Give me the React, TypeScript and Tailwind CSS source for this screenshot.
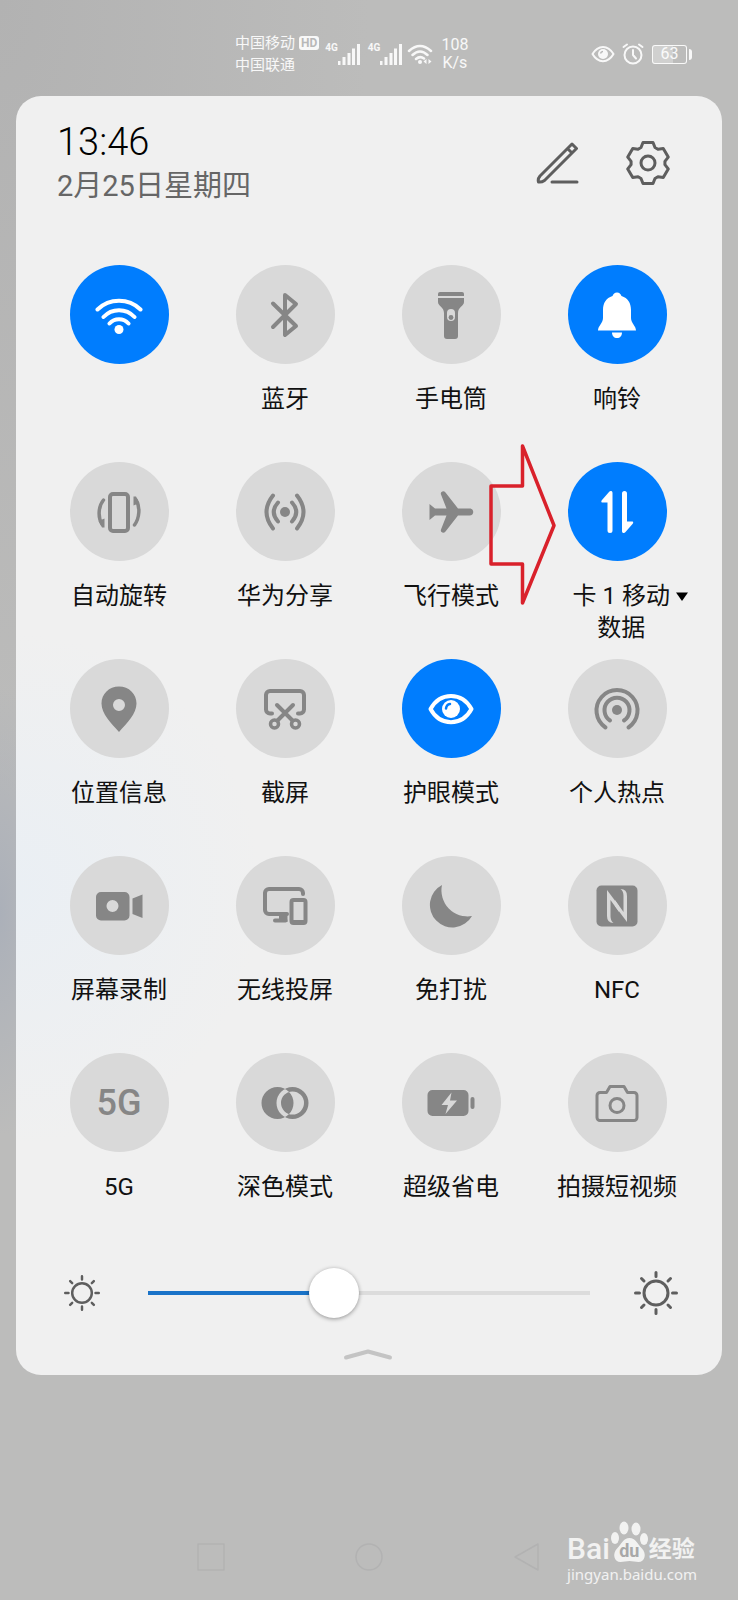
import { ReactNode, useState } from "react";
import clsx from "clsx";

interface Tile {
  name: string;
  label?: string;
  icon: ReactNode;
  on?: boolean;
}

const line = {
  fill: "none",
  stroke: "currentColor",
  strokeWidth: 4,
  strokeLinecap: "round",
  strokeLinejoin: "round",
} as const;

const Icon = ({ children }: { children: ReactNode }) => (
  <svg viewBox="0 0 48 48" className="h-12 w-12" fill="currentColor" aria-hidden="true">
    {children}
  </svg>
);

const tiles: Tile[] = [
  {
    name: "WLAN",
    on: true,
    icon: (
      <Icon>
        <path {...line} d="M2.500 18.500A31 31 0 0 1 45.500 18.500M8.500 26A21 21 0 0 1 39.500 26M14.500 32.500A13 13 0 0 1 33.500 32.500" />
        <circle cx="24" cy="38.500" r="4.500" />
      </Icon>
    ),
  },
  {
    name: "bluetooth",
    label: "蓝牙",
    icon: (
      <Icon>
        <path {...line} d="M12 12.500L35 35L24 44V4L35 13L12 36" />
      </Icon>
    ),
  },
  {
    name: "torch",
    label: "手电筒",
    icon: (
      <Icon>
        <path d="M13 1h22a2 2 0 0 1 2 2v2H11V3a2 2 0 0 1 2-2z" />
        <path
          fillRule="evenodd"
          d="M11 7h26v4c0 4-6 5-6 11v23a3 3 0 0 1-3 3h-8a3 3 0 0 1-3-3V22c0-6-6-7-6-11zM24 18a4 4 0 0 0-4 4v4a4 4 0 0 0 8 0v-4a4 4 0 0 0-4-4z"
        />
        <circle cx="24" cy="26.500" r="2.400" />
      </Icon>
    ),
  },
  {
    name: "sound",
    label: "响铃",
    on: true,
    icon: (
      <Icon>
        <path d="M24 1.500c2.500 0 3.500 1.500 4.500 3.500C35 7 38 12 38 19v8c0 5 5 8 5 12.500H5C5 35 10 32 10 27v-8c0-7 3-12 9.500-14 1-2 2-3.500 4.500-3.500z" />
        <path d="M19 41.500h10c0 3.500-2 5.500-5 5.500s-5-2-5-5.500z" />
      </Icon>
    ),
  },
  {
    name: "rotate",
    label: "自动旋转",
    icon: (
      <Icon>
        <rect {...line} x="15" y="6" width="18" height="37" rx="3" />
        <path {...line} strokeWidth="3.500" d="M8.500 12C3.500 18 2.500 29 7 36M39.500 37C44.500 30 45.500 19 41 12" />
        <path d="M3.500 33L9.500 30.500V39.500L7 39.500zM44.500 15L38.500 17.500V8.500L41 8.500z" />
      </Icon>
    ),
  },
  {
    name: "share",
    label: "华为分享",
    icon: (
      <Icon>
        <circle cx="24" cy="24" r="5" />
        <path {...line} d="M17 14.500Q8.500 24 17 33.500M31 14.500Q39.500 24 31 33.500M12 7.500Q-1 24 12 40.500M36 7.500Q49 24 36 40.500" />
      </Icon>
    ),
  },
  {
    name: "airplane",
    label: "飞行模式",
    icon: (
      <Icon>
        <path d="M42.500 20.500H31L18.500 4.500C16.500 2 13 4 14 6.500L19.500 20.500H8L2.500 16V32L8 27.500H19.500L14 41.500C13 44 16.500 46 18.500 43.500L31 27.500H42.500C47.500 27.500 47.500 20.500 42.500 20.500z" />
      </Icon>
    ),
  },
  {
    name: "data",
    label: "卡 1 移动数据",
    on: true,
    icon: (
      <Icon>
        <path d="M16 4C17 2.500 19.500 2.500 19.500 5V42.500a2.500 2.500 0 0 1-5 0V14.500L9.500 14.500C8 14.500 8 13 9 12z" />
        <path d="M32.500 44C31.500 45.500 29 45.500 29 43V5.500a2.500 2.500 0 0 1 5 0V33.500L39 33.500C40.500 33.500 40.500 35 39.500 36z" />
      </Icon>
    ),
  },
  {
    name: "location",
    label: "位置信息",
    icon: (
      <Icon>
        <path
          fillRule="evenodd"
          d="M24 1.500c10 0 17.500 7.500 17.500 17C41.500 29 32 38 24 47 16 38 6.500 29 6.500 18.500 6.500 9 14 1.500 24 1.500zM24 14a6 6 0 1 0 0 12 6 6 0 0 0 0-12z"
        />
      </Icon>
    ),
  },
  {
    name: "screenshot",
    label: "截屏",
    icon: (
      <Icon>
        <path {...line} d="M11 28.500H9a4 4 0 0 1-4-4V10a4 4 0 0 1 4-4H39a4 4 0 0 1 4 4V24.500a4 4 0 0 1-4 4H37M16 20L31.500 35.500M32 20L16.500 35.500" />
        <circle {...line} strokeWidth="3.500" cx="13.500" cy="39" r="4" />
        <circle {...line} strokeWidth="3.500" cx="34.500" cy="39" r="4" />
      </Icon>
    ),
  },
  {
    name: "eye",
    label: "护眼模式",
    on: true,
    icon: (
      <Icon>
        <path {...line} d="M3.500 24C13 6.500 35 6.500 44.500 24C35 41.500 13 41.500 3.500 24z" />
        <circle cx="24" cy="24" r="9" />
        <path d="M19 23.500Q19.500 19.500 23 19" fill="none" stroke="#007dfe" strokeWidth="2.500" strokeLinecap="round" />
      </Icon>
    ),
  },
  {
    name: "hotspot",
    label: "个人热点",
    icon: (
      <Icon>
        <circle cx="24" cy="25" r="5" />
        <path {...line} d="M17 35.500A12.500 12.500 0 1 1 31 35.500M12.500 42.500A20.500 20.500 0 1 1 35.500 42.500" />
      </Icon>
    ),
  },
  {
    name: "record",
    label: "屏幕录制",
    icon: (
      <Icon>
        <path
          fillRule="evenodd"
          d="M6 10H29.500a5 5 0 0 1 5 5V33.500a5 5 0 0 1-5 5H6a5 5 0 0 1-5-5V15a5 5 0 0 1 5-5zM17.500 18a6 6 0 1 0 0 12 6 6 0 0 0 0-12z"
        />
        <path d="M37.500 16.500L47.500 12.500V36L37.500 32z" />
      </Icon>
    ),
  },
  {
    name: "cast",
    label: "无线投屏",
    icon: (
      <Icon>
        <path {...line} d="M42 12V11a4 4 0 0 0-4-4H8A4 4 0 0 0 4 11V28a4 4 0 0 0 4 4H26M14 38.500H24.500" />
        <path d="M18 32h8.500v8H18z" />
        <rect {...line} x="30.500" y="18" width="14" height="23" rx="2" />
        <path d="M31 38h13v4H31z" />
      </Icon>
    ),
  },
  {
    name: "dnd",
    label: "免打扰",
    icon: (
      <Icon>
        <path d="M15 3A22.500 22.500 0 1 0 45 34A26 26 0 0 1 15 3z" />
      </Icon>
    ),
  },
  {
    name: "nfc",
    label: "NFC",
    icon: (
      <Icon>
        <rect x="3.500" y="3.500" width="41" height="41" rx="5" />
        <g fill="#d9d9d9">
          <path d="M14 8L26 24V30L17.500 18V34Q17.500 39 20.500 41Q14 41 14 34z" />
          <path d="M34 40L22 24V18L30.500 30V14Q30.500 9 27.500 7Q34 7 34 14z" />
        </g>
      </Icon>
    ),
  },
  {
    name: "5g",
    label: "5G",
    icon: <span className="text-[36px] leading-none font-medium">5G</span>,
  },
  {
    name: "dark",
    label: "深色模式",
    icon: (
      <Icon>
        <path
          fillRule="evenodd"
          d="M.500 24a16 16 0 0 1 32 0 16 16 0 0 1-32 0zM15.500 24a16 16 0 0 1 32 0 16 16 0 0 1-32 0zM20 24a11.500 11.500 0 0 0 23 0 11.500 11.500 0 0 0-23 0z"
        />
      </Icon>
    ),
  },
  {
    name: "battery",
    label: "超级省电",
    icon: (
      <Icon>
        <path
          fillRule="evenodd"
          d="M5.500 11H36.500a5 5 0 0 1 5 5V32a5 5 0 0 1-5 5H5.500a5 5 0 0 1-5-5V16a5 5 0 0 1 5-5zM24.500 13.500L14.500 26H21L18.500 35L30 21.500H23z"
        />
        <rect x="43.500" y="18" width="4" height="12" rx="2" />
      </Icon>
    ),
  },
  {
    name: "camera",
    label: "拍摄短视频",
    icon: (
      <Icon>
        <path {...line} strokeWidth="3" d="M7 13.500H13.500L17 7.500H31L34.500 13.500H41a3 3 0 0 1 3 3V38.500a3 3 0 0 1-3 3H7a3 3 0 0 1-3-3V16.500a3 3 0 0 1 3-3z" />
        <circle {...line} strokeWidth="3" cx="24" cy="26.500" r="7" />
      </Icon>
    ),
  },
];

const TileButton = ({ tile }: { tile: Tile }) => {
  const [on, setOn] = useState<boolean>(!!tile.on);
  const isData = tile.name === "data";

  return (
    <div className="relative">
      <button
        type="button"
        aria-pressed={on}
        aria-label={tile.label || tile.name}
        onClick={() => setOn(!on)}
        className="flex w-full flex-col items-center"
      >
        <span
          className={clsx(
            "flex h-[99px] w-[99px] items-center justify-center rounded-full",
            on ? "bg-[#007dfe] text-white" : "bg-[#d9d9d9] text-[#868686]"
          )}
        >
          {tile.icon}
        </span>
        {isData ? (
          <span className="mt-[19px] flex w-full justify-end gap-[6px] pr-3 text-[24px] leading-8">
            <span>
              卡 1 移动
              <br />
              数据
            </span>
            <svg viewBox="0 0 12 32" className="h-8 w-3" aria-hidden="true">
              <path d="M0 12.500h12L6 21z" />
            </svg>
          </span>
        ) : (
          <span className="mt-[19px] text-[24px] leading-8">{tile.label}</span>
        )}
      </button>
      {isData && (
        <svg
          viewBox="0 0 68 164"
          className="pointer-events-none absolute -top-[18px] -left-[45px] h-[164px] w-[68px]"
          fill="none"
          stroke="#d9212b"
          strokeWidth="3.500"
          strokeLinejoin="round"
          aria-hidden="true"
        >
          <path d="M33.500 2V42H2V120H33.500V159L65 81.500z" />
        </svg>
      )}
    </div>
  );
};

// six teeth, each one turned by 60 degrees
const gearPath = () => {
  const tooth = [
    [-7, -15.5],
    [-5, -20.5],
    [5, -20.5],
    [7, -15.5],
  ];
  const points: string[] = [];
  for (let i = 0; i < 6; i++) {
    const a = (i * Math.PI) / 3;
    tooth.forEach(([x, y]) => {
      const px = x * Math.cos(a) - y * Math.sin(a) + 22;
      const py = x * Math.sin(a) + y * Math.cos(a) + 22;
      points.push(`${px.toFixed(2)} ${py.toFixed(2)}`);
    });
  }
  return `M${points.join("L")}z`;
};

const Sun = ({ className }: { className: string }) => (
  <svg viewBox="0 0 44 44" className={className} {...line} strokeWidth="3" aria-hidden="true">
    <circle cx="22" cy="22" r="12" />
    <path d="M22 1.500v4M22 38.500v4M1.500 22h4M38.500 22h4M7.500 7.500l2.500 2.500M34 34l2.500 2.500M7.500 36.500l2.500-2.500M34 10l2.500-2.500" />
  </svg>
);

const Signal = () => (
  <div className="flex">
    <span className="text-[10px] leading-none font-bold">4G</span>
    <svg viewBox="0 0 22 22" className="h-[22px] w-[22px]" fill="currentColor" aria-hidden="true">
      <path d="M0 18h2.500v4H0zM4.500 14h3v8h-3zM9.500 10h3v12h-3zM14 5.500h3V22h-3zM19 1h3v21h-3z" />
    </svg>
  </div>
);

const StatusBar = () => (
  <header className="flex h-24 items-center justify-between pt-3 pr-[46px] pl-[235px] text-white/90">
    <div className="flex items-center">
      <div className="text-[15px] leading-[22px]">
        <div className="flex items-center gap-1">
          <span>中国移动</span>
          <span className="rounded-[3px] bg-white/90 px-[2px] text-[12px] leading-[14px] font-bold text-[#b8b8b8]">
            HD
          </span>
        </div>
        <div>中国联通</div>
      </div>
      <div className="ml-[6px] flex gap-2">
        <Signal />
        <Signal />
      </div>
      <svg viewBox="0 0 26 22" className="ml-[5px] h-[22px] w-[26px]" aria-hidden="true">
        <path {...line} strokeWidth="2.500" d="M2 8Q13-2 24 8M5.500 12Q13 5 20.500 12M9 16Q13 12.500 17 15.500" />
        <circle cx="13" cy="19" r="2" fill="currentColor" />
        <path d="M19.500 16v5l-3-2.500zM21.500 16v5l3-2.500z" fill="currentColor" />
      </svg>
      <div className="ml-2 text-center text-[16px] leading-[18px]">
        108
        <br />
        K/s
      </div>
    </div>
    <div className="flex items-center">
      <svg viewBox="0 0 24 18" className="h-[18px] w-6" aria-hidden="true">
        <path {...line} strokeWidth="2" d="M1.500 9C7-.5 17-.5 22.500 9 17 18.500 7 18.500 1.500 9z" />
        <circle cx="12" cy="9" r="5" fill="currentColor" />
        <path d="M9.500 8.500Q10 6.500 12 6.500" fill="none" stroke="#b8b8b8" strokeWidth="1.500" />
      </svg>
      <svg viewBox="0 0 22 22" className="ml-[7px] h-[22px] w-[22px]" aria-hidden="true">
        <path {...line} strokeWidth="2" d="M11 7v5l3 3.500M1.500 4L5 1.500M20.500 4L17 1.500" />
        <circle {...line} strokeWidth="2" cx="11" cy="12" r="8.500" />
      </svg>
      <div className="ml-[8px] flex items-center gap-[2px]">
        <span className="flex h-[19px] w-[35px] items-center justify-center rounded-[3px] border border-white/90 bg-linear-to-r from-white/30 from-60% to-transparent to-60% text-[16px] leading-none">
          63
        </span>
        <span className="h-[11px] w-[3px] rounded-r-sm bg-white/90" />
      </div>
    </div>
  </header>
);

const Watermark = () => (
  <div className="absolute right-[41px] bottom-[15px] text-white/80">
    <div className="flex items-end">
      <span className="text-[30px] leading-[28px] font-medium">Bai</span>
      <div className="relative h-[42px] w-[39px]">
        <svg viewBox="0 0 38 42" className="h-full w-full" fill="currentColor" aria-hidden="true">
          <ellipse cx="13.500" cy="7" rx="4.500" ry="6.500" />
          <ellipse cx="25.500" cy="8" rx="4.500" ry="6.500" />
          <ellipse cx="4.500" cy="17" rx="4" ry="6" />
          <ellipse cx="33.500" cy="18" rx="4" ry="6" />
          <path d="M19 17c6 0 8 6 12 10 6 6 3 14-3 14-3 0-6-1-9-1s-6 1-9 1c-6 0-9-8-3-14 4-4 6-10 12-10z" />
        </svg>
        <span className="absolute inset-x-0 bottom-[2px] text-center text-[18px] leading-[20px] font-bold text-[#a8a8a8]">
          du
        </span>
      </div>
      <span className="text-[23px] leading-[26px] font-bold">经验</span>
    </div>
    <div className="font-['Noto_Sans',sans-serif] text-[15px] leading-[22px]">jingyan.baidu.com</div>
  </div>
);

const App = () => {
  const [brightness, setBrightness] = useState<number>(41);

  return (
    <div className="flex min-h-screen flex-col bg-[#bcbcbb] bg-[radial-gradient(ellipse_8%_14%_at_0%_57%,#abb0b9,transparent),radial-gradient(ellipse_50%_50%_at_0%_0%,#b2b2b2,transparent)] font-[Roboto,'Noto_Sans_CJK_SC',sans-serif] text-[#111]">
      <StatusBar />

      <main className="mx-4 rounded-[25px] bg-[#f0f0f0] bg-[radial-gradient(ellipse_35%_20%_at_0%_62%,#eaeff4,transparent)] pt-[26px] pr-[22px] pb-[15px] pl-5">
        <div className="flex items-center justify-between pr-[30px] pl-[21px]">
          <div>
            <div className="text-[38px] leading-[40px] font-light text-black">13:46</div>
            <div className="mt-[6px] text-[29px] leading-9 text-[#666]">2月25日星期四</div>
          </div>
          <div className="flex gap-[46px] text-[#5e5e5e]">
            <button type="button" aria-label="编辑">
              <svg viewBox="0 0 44 44" className="h-11 w-11" {...line} strokeWidth="3" aria-hidden="true">
                <path d="M36 3L40.500 7.500 8.500 39.500Q5.500 41.500 2.500 41Q1.500 38 4 35zM31.500 7.500L36 12M16 41H41" />
              </svg>
            </button>
            <button type="button" aria-label="设置">
              <svg viewBox="0 0 44 44" className="h-11 w-11" {...line} strokeWidth="3" aria-hidden="true">
                <path d={gearPath()} />
                <circle cx="22" cy="22" r="7" />
              </svg>
            </button>
          </div>
        </div>

        <div className="mt-[61px] grid auto-rows-[197px] grid-cols-4">
          {tiles.map((tile) => (
            <TileButton key={tile.name} tile={tile} />
          ))}
        </div>

        <div className="mt-[18px] flex items-center pr-[22px] pl-7 text-[#5e5e5e]">
          <Sun className="h-9 w-9" />
          <input
            type="range"
            aria-label="亮度"
            value={brightness}
            onChange={(e) => setBrightness(Number(e.target.value))}
            style={{
              backgroundImage: `linear-gradient(to right, #1a73c8 ${brightness}%, #dcdcdc ${brightness}%)`,
            }}
            className="mr-11 ml-12 h-[50px] min-w-0 flex-1 appearance-none bg-[length:100%_4px] bg-center bg-no-repeat [&::-webkit-slider-thumb]:h-[50px] [&::-webkit-slider-thumb]:w-[50px] [&::-webkit-slider-thumb]:appearance-none [&::-webkit-slider-thumb]:rounded-full [&::-webkit-slider-thumb]:bg-white [&::-webkit-slider-thumb]:shadow-[0_1px_4px_rgba(0,0,0,0.4)]"
          />
          <Sun className="h-11 w-11" />
        </div>

        <button type="button" aria-label="收起" className="mx-auto mt-[30px] block text-[#c4c4c4]">
          <svg viewBox="0 0 50 12" className="h-3 w-[50px]" {...line} aria-hidden="true">
            <path d="M3 9.500L25 3.500L47 9.500" />
          </svg>
        </button>
      </main>

      <footer className="relative mt-auto pb-[29px]">
        <nav className="flex justify-center gap-[130px] text-[#b2b2b2]">
          <button type="button" aria-label="最近任务">
            <svg viewBox="0 0 28 28" className="h-7 w-7" {...line} strokeWidth="1.500">
              <path d="M1 1h26v26H1z" />
            </svg>
          </button>
          <button type="button" aria-label="主屏幕">
            <svg viewBox="0 0 28 28" className="h-7 w-7" {...line} strokeWidth="1.500">
              <circle cx="14" cy="14" r="13" />
            </svg>
          </button>
          <button type="button" aria-label="返回">
            <svg viewBox="0 0 28 28" className="h-7 w-7" {...line} strokeWidth="1.500">
              <path d="M25 1v26L2 14z" />
            </svg>
          </button>
        </nav>
        <Watermark />
      </footer>
    </div>
  );
};

export default App;
